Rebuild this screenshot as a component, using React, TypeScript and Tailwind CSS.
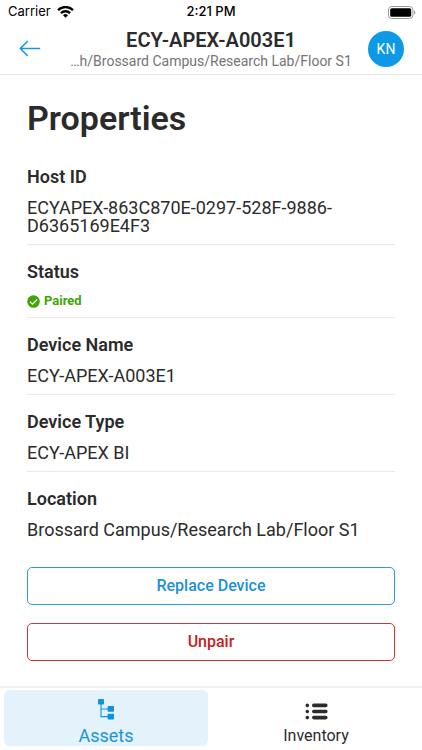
import type { ReactNode } from "react";

function StatusBar() {
  return (
    <div className="relative flex h-6 items-center justify-between pr-[6px] pl-2 font-['Inter',sans-serif] text-[13px] text-black">
      <div className="flex items-center gap-[6px]">
        <span>Carrier</span>
        <svg width="17" height="12" viewBox="0 0 17 12" aria-hidden="true">
          <path d="M8.5 11.8 11 9.2a3.7 3.7 0 0 0-5 0Z" fill="#000" />
          <path d="M3.9 7.1a6.6 6.6 0 0 1 9.2 0M1 4.1a10.7 10.7 0 0 1 15 0" fill="none" stroke="#000" strokeWidth="2.3" />
        </svg>
      </div>
      <span className="absolute left-1/2 -translate-x-1/2 font-medium whitespace-nowrap">2:21 PM</span>
      <svg width="28" height="13" viewBox="0 0 28 13" aria-hidden="true">
        <rect x="0.5" y="0.5" width="24.4" height="12" rx="3.4" fill="none" stroke="#9a9a9a" />
        <rect x="2.2" y="2.2" width="21" height="8.6" rx="1.6" fill="#000" />
        <path d="M26 4.4v4.2a2.3 2.3 0 0 0 0-4.2Z" fill="#9a9a9a" />
      </svg>
    </div>
  );
}

function Header() {
  return (
    <header className="flex h-[51px] items-center justify-between border-b border-[#e6e6e6] px-[18px]">
      <button type="button" aria-label="Back" className="flex w-9 items-center">
        <svg width="24" height="18" viewBox="0 0 24 18" fill="none" stroke="#1496e1" strokeWidth="1.6" strokeLinecap="round" strokeLinejoin="round" aria-hidden="true">
          <path d="M21.5 8.5H2.5M9.3 1.5 2.3 8.5l7 7" />
        </svg>
      </button>
      <div className="min-w-0 text-center">
        <h1 className="text-[20px] leading-6 font-semibold text-[#2b2b2b]">ECY-APEX-A003E1</h1>
        <p className="text-[14px] leading-[18px] whitespace-nowrap text-[#747474]">…h/Brossard Campus/Research Lab/Floor S1</p>
      </div>
      <button type="button" className="size-9 shrink-0 rounded-full bg-[#0d99e5] text-[14px] text-white">KN</button>
    </header>
  );
}

function Property({ label, children, last = false }: { label: string; children: ReactNode; last?: boolean }) {
  return (
    <div className={last ? "pt-[17px]" : "border-b border-[#e9e9e9] pt-[17px] pb-[9px]"}>
      <dt className="text-[18px] leading-5 font-semibold">{label}</dt>
      <dd className="mt-3 text-[18px] leading-[18px]">{children}</dd>
    </div>
  );
}

export default function App() {
  return (
    <div className="flex min-h-screen flex-col bg-white font-['Roboto',sans-serif] text-[#2b2b2b]">
      <StatusBar />
      <Header />
      <main className="flex-1 px-[27px] pt-6">
        <h2 className="text-[34px] leading-[38px] font-semibold">Properties</h2>
        <dl className="mt-[13px]">
          <Property label="Host ID">ECYAPEX-863C870E-0297-528F-9886-D6365169E4F3</Property>
          <div className="border-b border-[#e9e9e9] pt-[17px] pb-[7px]">
            <dt className="text-[18px] leading-5 font-semibold">Status</dt>
            <dd className="mt-[10px] flex items-center gap-1 text-[13px] leading-[18px] font-bold text-[#41a407]">
              <svg width="13" height="13" viewBox="0 0 13 13" aria-hidden="true">
                <circle cx="6.5" cy="6.5" r="6.3" fill="#41a407" />
                <path d="m3 6.8 2.4 2.3 4.8-4.6" fill="none" stroke="#fff" strokeWidth="1.2" />
              </svg>
              Paired
            </dd>
          </div>
          <Property label="Device Name">ECY-APEX-A003E1</Property>
          <Property label="Device Type">ECY-APEX BI</Property>
          <Property label="Location" last>Brossard Campus/Research Lab/Floor S1</Property>
        </dl>
        <div className="mt-7 flex flex-col gap-[18px]">
          <button type="button" className="h-[38px] rounded-[5px] border border-[#2b9be0] text-[16px] font-medium text-[#1e90d8]">Replace Device</button>
          <button type="button" className="h-[38px] rounded-[5px] border border-[#cf3535] text-[16px] font-medium text-[#c4211c]">Unpair</button>
        </div>
      </main>
      <nav className="grid grid-cols-2 gap-[6px] border-t-2 border-[#f0f0f0] px-1 pt-[2px] pb-1">
        <button type="button" aria-current="page" className="flex h-14 flex-col items-center justify-end rounded-md bg-[#e4f2fc] text-[18px] leading-5 text-[#1894dc]">
          <svg width="16" height="21" viewBox="0 0 16 21" fill="#0d92dd" aria-hidden="true">
            <rect x="0" y="0" width="6" height="5.6" rx="0.8" />
            <rect x="9.6" y="7" width="6.4" height="5.8" rx="0.8" />
            <rect x="9.6" y="14.8" width="6.4" height="5.6" rx="0.8" />
            <path d="M3 5v12.6h7M3 10h7" fill="none" stroke="#0d92dd" strokeWidth="1.1" />
          </svg>
          <span className="mt-[6px]">Assets</span>
        </button>
        <button type="button" className="flex h-14 flex-col items-center justify-end rounded-md text-[16px] leading-5">
          <svg width="23" height="17" viewBox="0 0 23 17" fill="none" stroke="#2b2b2b" strokeWidth="3.6" strokeLinecap="round" aria-hidden="true">
            <path d="M8.8 2.4H20.8M8.8 8.5H20.8M8.8 14.6H20.8" />
            <path d="M2.3 2.4h.01M2.3 8.5h.01M2.3 14.6h.01" />
          </svg>
          <span className="mt-[6px]">Inventory</span>
        </button>
      </nav>
    </div>
  );
}
